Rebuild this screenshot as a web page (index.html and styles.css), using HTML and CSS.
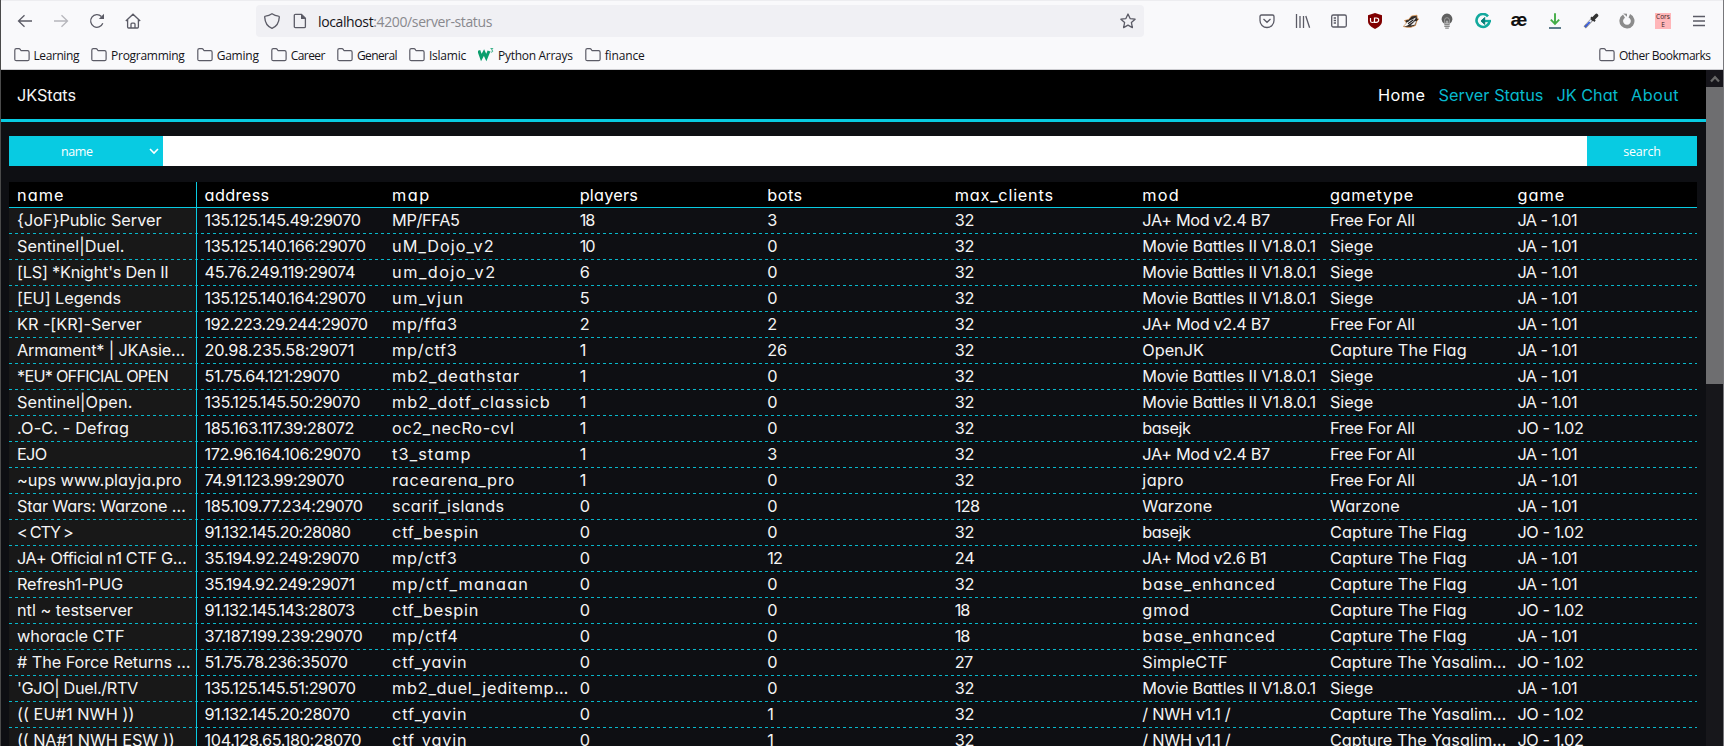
FILE: index.html
```
<!DOCTYPE html>
<html lang="en">
<head>
<meta charset="utf-8">
<title>JKStats</title>
<link rel="stylesheet" href="styles.css">
</head>
<body>
<svg class="defs" width="0" height="0"><symbol id="folder" viewBox="0 0 16 16"><path d="M.8 12.2V3.2Q.8 1.7 2.3 1.7H5q.8 0 1.2.6l.5.8q.4.6 1.2.6h5.7q1.5 0 1.5 1.5v7q0 1.5-1.5 1.5H2.3q-1.5 0-1.5-1.5Z" fill="none" stroke="#5b5b66" stroke-width="1.2"/></symbol></svg>
<div class="window">
  <header class="chrome">
    <div class="toolbar">
      <div class="nav-buttons">
        <svg class="ic" viewBox="0 0 16 16"><path d="M15 8H1.5M7.5 2.2 1.5 8l6 5.8"/></svg>
        <svg class="ic dim" viewBox="0 0 16 16"><path d="M1 8h13.500M8.500 2.200l6 5.800-6 5.800"/></svg>
        <svg class="ic" viewBox="0 0 16 16"><path d="M13.800 10.300A6.300 6.300 0 1 1 12.400 3.500"/><path class="fill" d="M15 .8V6H9.800Z"/></svg>
        <svg class="ic" viewBox="0 0 16 16"><path d="M.8 8 8 1.200 15.200 8M2.600 6.800v7.200q0 1 1 1h8.800q1 0 1-1V6.800M6 15v-3.800q0-1 1-1h2q1 0 1 1V15"/></svg>
      </div>
      <div class="urlbar">
        <svg class="ic" viewBox="0 0 16 16"><path d="M8 .8C6 2.200 3.500 3 1.500 3.100c-.6 0-.8.5-.8 1C1 9.300 3.500 13.600 8 15.300c4.500-1.700 7-6 7.300-11.200 0-.5-.2-1-.8-1C12.500 3 10 2.200 8 .8Z"/></svg>
        <svg class="ic doc" viewBox="0 0 16 16"><path d="M3.500 1.300H9.500L13.400 5.200v8.300q0 1.200-1.200 1.200H3.500q-1.200 0-1.200-1.200v-11q0-1.200 1.200-1.200Z"/><path class="fill" d="M9 1v5h5Z"/></svg>
        <div class="url" data-w="174"><b>localhost</b>:4200/server-status</div>
        <svg class="ic star" viewBox="0 0 16 16"><path stroke-linejoin="round" d="m8 1 2.100 4.600 5 .6-3.700 3.400 1 5L8 12.100l-4.400 2.500 1-5L.9 6.200l5-.6Z"/></svg>
      </div>
      <div class="extensions">
        <svg class="ic" viewBox="0 0 16 16"><path d="M2.500 2h11q1.500 0 1.500 1.500V7.500a7 7 0 0 1-14 0v-4Q1 2 2.500 2ZM4.500 6 8 9.300 11.500 6"/></svg>
        <svg class="ic" viewBox="0 0 16 16"><path d="M1.500 1v14M5 3v12M8.500 3v12M10.800 3l3.800 11.800"/></svg>
        <svg class="ic" viewBox="0 0 16 16"><rect x=".7" y="2" width="14.600" height="12" rx="1.500"/><path d="M7 2v12M2.700 5h2.300M2.700 7.500h2.300M2.700 10h2.300"/></svg>
        <svg class="ic" viewBox="0 0 16 16"><path d="M8 0 15 2.300V8c0 4-3.500 6.300-7 8-3.500-1.700-7-4-7-8V2.300Z" fill="#800000" stroke="none"/><path d="M3.500 5v3q0 1.500 2 1.500t2-1.500V5m0 0v4.300h1.700q2.500 0 2.500-2.200T9.200 5Z" stroke="#fff" stroke-width="1.200"/></svg>
        <svg class="ic" viewBox="0 0 16 16"><path d="M.3 13.500 3.500 10 1.500 7.500 5.500 6.500 8.500 3 14 2.200l.2 3 1.500.8-2 2.500-1.200 4-4.500 1.800H4Z" fill="#302b29" stroke="#e29a55" stroke-width=".8"/><path d="M.8 13.300 5 8.500l8-4-2.500 3.800L4 12.800Z" fill="#fff" stroke="none"/><path d="m7.500 12.500 4.500-4.500 1.200.5-1.500 3.300Z" fill="#eee" stroke="none"/><path d="m5 10.800 5.500-4M3 8l2.500.5" stroke="#222" stroke-width="1.200"/></svg>
        <svg class="ic" viewBox="0 0 16 16"><path d="M5 10.500A5.400 5.400 0 1 1 11 10.500Z" fill="#606060" stroke="none"/><path d="M5.600 10V7q0-2.300 2.400-2.300T10.400 7v3" stroke="#aaa" stroke-width=".8"/><path d="M7.200 12V8.500q.8-1.500 1.600 0V12" stroke="#ddd" stroke-width=".8"/><path d="M5.300 11.500h5.400M5.300 13.300h5.400M6.200 15.200h3.600" stroke="#888" stroke-width="1.300"/></svg>
        <svg class="ic" viewBox="0 0 16 16"><path d="M13 3.300A6.500 6.500 0 1 0 14.500 8" stroke="#12a99d" stroke-width="2.600"/><path d="M6.500 8H16" stroke="#12a99d" stroke-width="2.300"/><path d="M9.700 4.500 6.200 8l3.500 3.500Z" fill="#087e78" stroke="#087e78" stroke-width="1"/></svg>
        <span class="ae">æ</span>
        <svg class="ic" viewBox="0 0 16 16"><path d="M8 .3v10.400M3.800 6.700 8 11l4.200-4.300" stroke="#43ad47" stroke-width="1.900"/><path d="M2 15h12" stroke="#5c7b8b" stroke-width="2"/></svg>
        <svg class="ic" viewBox="0 0 16 16"><path d="m1.700 14.300 7.500-8" stroke="#888" stroke-width="3.200"/><path d="m4 11.700 4.300-4.500" stroke="#e9eefb" stroke-width="1.800"/><path d="m2 14 4.700-5" stroke="#3156df" stroke-width="1.700"/><path d="m8 4.200 4 4" stroke="#333" stroke-width="2"/><path d="m10 6 3.500-3.500" stroke="#333" stroke-width="3.600" stroke-linecap="round"/></svg>
        <svg class="ic" viewBox="0 0 16 16"><path d="M10.300 2.800a5.700 5.700 0 1 1-5.300.3" stroke="#8c8c8c" stroke-width="3.700"/><path d="M4.200.5 8 .8v3Z" fill="#8c8c8c" stroke="none"/></svg>
        <span class="cors">Cors<br>E</span>
        <svg class="ic" viewBox="0 0 16 16"><path d="M2 3.500h12M2 8h12M2 12.500h12"/></svg>
      </div>
    </div>
    <nav class="bookmarks">
      <span class="bm"><svg><use href="#folder"/></svg><span data-w="45.500">Learning</span></span>
      <span class="bm"><svg><use href="#folder"/></svg><span data-w="73.500">Programming</span></span>
      <span class="bm"><svg><use href="#folder"/></svg><span data-w="42">Gaming</span></span>
      <span class="bm"><svg><use href="#folder"/></svg><span data-w="34">Career</span></span>
      <span class="bm"><svg><use href="#folder"/></svg><span data-w="40">General</span></span>
      <span class="bm"><svg><use href="#folder"/></svg><span data-w="37">Islamic</span></span>
      <span class="bm"><svg viewBox="0 0 16 16"><path d="m.8 3.500 2.500 7L6 5.500l2.300 5L11 4" fill="none" stroke="#0b9e6d" stroke-width="3"/><path d="M12.500 1.500h2.300L13.500 3q1.500.3 1.200 1.500-.6 1-2 .5" fill="none" stroke="#0b9e6d" stroke-width=".8"/></svg><span data-w="74.500">Python Arrays</span></span>
      <span class="bm"><svg><use href="#folder"/></svg><span data-w="40">finance</span></span>
      <span class="bm other"><svg><use href="#folder"/></svg><span data-w="91.500">Other Bookmarks</span></span>
    </nav>
  </header>
  <div class="viewport">
    <main class="page">
      <div class="navbar">
        <a class="brand" data-w="59">JKStats</a>
        <div class="links">
          <a class="active" data-w="47.500">Home</a>
          <a data-w="105">Server Status</a>
          <a data-w="61.500">JK Chat</a>
          <a data-w="48">About</a>
        </div>
      </div>
      <div class="search">
        <div class="select"><span data-w="31.500">name</span><svg viewBox="0 0 10 8"><path d="m1 2 4 4 4-4" fill="none" stroke="#fff" stroke-width="1.600"/></svg></div>
        <input class="query" type="text">
        <button class="go"><span data-w="37.500">search</span></button>
      </div>
      <div class="grid" id="grid"></div>
    </main>
    <div class="scrollbar">
      <div class="up"><svg viewBox="0 0 10 8"><path d="m1 6.500 4-4.300 4 4.300" fill="none" stroke="#686868" stroke-width="2.200"/></svg></div>
      <div class="thumb"></div>
    </div>
  </div>
</div>
<script src="app.js"></script>
</body>
</html>
```
FILE: styles.css
```
* { box-sizing: border-box; }
body {
  margin: 0;
  height: 746px;
  overflow: hidden;
  background: #0e0f13;
  font-family: "Open Sans", "Noto Sans", sans-serif;
}
.defs { position: absolute; }
.window {
  height: 746px;
  display: flex;
  flex-direction: column;
  border-left: 1px solid #4a4a4a;
  border-right: 1px solid #77777b;
}
.chrome {
  height: 70px;
  flex: none;
  background: #f9f9fb;
  border-top: 1px solid #ededf0;
  border-bottom: 1px solid #ccccd0;
}
.toolbar { height: 40px; display: flex; align-items: center; padding-left: 16px; padding-right: 16px; }
.ic { width: 16px; height: 16px; flex: none; fill: none; stroke: #5b5b66; stroke-width: 1.3; }
.ic .fill { fill: #5b5b66; stroke: none; }
.dim { opacity: .42; }
.nav-buttons { width: 239px; display: flex; gap: 20px; }
.urlbar {
  width: 888px;
  height: 32px;
  display: flex;
  align-items: center;
  padding: 0 8px;
  border-radius: 4px;
  background: #f0f0f4;
}
.doc { margin-left: 12px; }
.url { margin-left: 10px; padding-top: 2px; font-size: 14px; line-height: 20px; color: #89898e; white-space: nowrap; }
.url b { font-weight: 400; color: #15141a; }
.star { margin-left: auto; }
.extensions { margin-left: auto; display: flex; align-items: center; gap: 20px; }
.ae { width: 16px; text-align: center; font: 700 19px/16px "Liberation Sans", sans-serif; display: flex; justify-content: center; color: #111; padding-bottom: 4px; height: 18px; }
.cors { width: 16px; height: 16px; background: #ffb6b9; color: #332525; font: 6.5px/8px "Open Sans", sans-serif; text-align: center; white-space: nowrap; }
.bookmarks { height: 28px; display: flex; align-items: center; gap: 12.1px; padding: 1px 12.500px 0 12.500px; font-size: 12px; color: #15141a; }
.bm { display: flex; align-items: center; gap: 4px; line-height: 18px; white-space: nowrap; }
.bm > span { padding-top: 1px; }
.bm svg { width: 16px; height: 16px; flex: none; margin-top: -1px; }
.other { margin-left: auto; }
[data-w] { white-space: nowrap; }

.viewport { flex: 1; min-height: 0; display: flex; }
.page {
  flex: 1;
  min-width: 0;
  overflow: hidden;
  background: #0e0f13;
  color: #f4f4f4;
  font-family: Inter, "Open Sans", sans-serif;
  font-feature-settings: "cv11", "calt" 0;
  font-size: 16.3px;
}
.navbar {
  height: 52px;
  display: flex;
  align-items: center;
  justify-content: space-between;
  padding: 0 27px 0 16px;
  background: #000;
  border-bottom: 3px solid #08cbe2;
}
.links { display: flex; gap: 13px; color: #08b9cd; }
.links .active { color: #fff; }
.search { height: 30px; margin: 14px 9px 16px 8px; display: flex; font: 12.5px "Open Sans", sans-serif; }
.select { width: 154px; display: flex; align-items: center; padding: 0 4px 0 52px; color: #fff; background: #08cbe2; }
.select svg { width: 10px; height: 8px; margin-left: auto; }
.query { flex: 1; min-width: 0; border: 0; padding: 0 8px; background: #fff; }
.go { width: 110px; border: 0; padding: 0; color: #fff; background: #08cbe2; font: inherit; }
.grid { margin: 0 9px 0 8px; }
.row {
  height: 26px;
  display: grid;
  grid-template-columns: repeat(9, minmax(0, 1fr));
  background: repeating-linear-gradient(90deg, #08b7ca 0 2px, transparent 2px 6px) bottom / 100% 1px no-repeat;
  background: repeating-linear-gradient(90deg, #08b7ca 0 3px, transparent 3px 6px) bottom / 100% 1px no-repeat;
}
.row.head { background: #000; border-bottom: 1px solid #08cbe2; }
.cell { height: 25px; padding-left: 8px; line-height: 25px; overflow: hidden; white-space: nowrap; }
.cell:first-child { height: 26px; border-right: 1px solid #08cbe2; background: repeating-linear-gradient(90deg, #08b7ca 0 3px, #181818 3px 6px) bottom / 100% 1px no-repeat, #181818; }
.head .cell { line-height: 26px; color: #fff; }
.head .cell:first-child { height: 25px; background: #000; }
.scrollbar { width: 17px; background: #17171b; }
.up { height: 17px; display: flex; align-items: center; justify-content: center; background: #16151b; }
.up svg { width: 10px; height: 8px; }
.thumb { height: 297px; background: #6e6e70; }
```
FILE: app.js
```
// Text widths in px for values shared by many rows.
const widths = {
  "JA+ Mod v2.4 B7": 127.5, "JA+ Mod v2.6 B1": 124, "Movie Battles II V1.8.0.1": 173.5, "OpenJK": 61.5,
  "basejk": 48, "japro": 41.5, "Warzone": 70, "base_enhanced": 133.5, "gmod": 48, "SimpleCTF": 85.5,
  "/ NWH v1.1 /": 88, "Free For All": 85, "Siege": 43.5, "Capture The Flag": 137,
  "Capture The Yasalim…": 176.5, "JA - 1.01": 59.5, "JO - 1.02": 66,
  "0": 10, "1": 5, "2": 9, "3": 9, "5": 9.5, "6": 9.5, "10": 15, "12": 15, "18": 14.5, "24": 20,
  "26": 19.5, "27": 18, "32": 19.5, "128": 24.5
};
const header = [["name", 47.5], ["address", 65], ["map", 38.5], ["players", 58.5], ["bots", 35.5], ["max_clients", 99], ["mod", 37.5], ["gametype", 84], ["game", 48]];
const JP = "JA+ Mod v2.4 B7", MB = "Movie Battles II V1.8.0.1";
const FFA = "Free For All", CTF = "Capture The Flag", CTY = "Capture The Yasalim…";
const JA = "JA - 1.01", JO = "JO - 1.02";
const rows = [
  [["{JoF}Public Server", 144.5], ["135.125.145.49:29070", 156], ["MP/FFA5", 67.5], 18, 3, 32, JP, FFA, JA],
  [["Sentinel|Duel.", 107.5], ["135.125.140.166:29070", 161], ["uM_Dojo_v2", 102.5], 10, 0, 32, MB, "Siege", JA],
  [["[LS] *Knight's Den II", 151.5], ["45.76.249.119:29074", 150.5], ["um_dojo_v2", 104.5], 6, 0, 32, MB, "Siege", JA],
  [["[EU] Legends", 104], ["135.125.140.164:29070", 161], ["um_vjun", 72.5], 5, 0, 32, MB, "Siege", JA],
  [["KR -[KR]-Server", 124.5], ["192.223.29.244:29070", 163], ["mp/ffa3", 65.5], 2, 2, 32, JP, FFA, JA],
  [["Armament* | JKAsie…", 168], ["20.98.235.58:29071", 149.5], ["mp/ctf3", 65.5], 1, 26, 32, "OpenJK", CTF, JA],
  [["*EU* OFFICIAL OPEN", 151], ["51.75.64.121:29070", 135], ["mb2_deathstar", 128], 1, 0, 32, MB, "Siege", JA],
  [["Sentinel|Open.", 115.5], ["135.125.145.50:29070", 155.5], ["mb2_dotf_classicb", 158.5], 1, 0, 32, MB, "Siege", JA],
  [[".O-C. - Defrag", 112], ["185.163.117.39:28072", 149.5], ["oc2_necRo-cvl", 122.5], 1, 0, 32, "basejk", FFA, JO],
  [["EJO", 29.5], ["172.96.164.106:29070", 156], ["t3_stamp", 79.5], 1, 3, 32, JP, FFA, JA],
  [["~ups www.playja.pro", 164.5], ["74.91.123.99:29070", 139.5], ["racearena_pro", 123], 1, 0, 32, "japro", FFA, JA],
  [["Star Wars: Warzone …", 168.5], ["185.109.77.234:29070", 158], ["scarif_islands", 112.5], 0, 0, 128, "Warzone", "Warzone", JA],
  [["< CTY >", 55.5], ["91.132.145.20:28080", 146], ["ctf_bespin", 87], 0, 0, 32, "basejk", CTF, JO],
  [["JA+ Official n1 CTF G…", 169.5], ["35.194.92.249:29070", 154.5], ["mp/ctf3", 65.5], 0, 12, 24, "JA+ Mod v2.6 B1", CTF, JA],
  [["Refresh1-PUG", 106], ["35.194.92.249:29071", 150], ["mp/ctf_manaan", 137], 0, 0, 32, "base_enhanced", CTF, JA],
  [["ntl ~ testserver", 116], ["91.132.145.143:28073", 150], ["ctf_bespin", 87], 0, 0, 18, "gmod", CTF, JO],
  [["whoracle CTF", 107.5], ["37.187.199.239:29070", 158], ["mp/ctf4", 66.5], 0, 0, 18, "base_enhanced", CTF, JA],
  [["# The Force Returns …", 173.5], ["51.75.78.236:35070", 143], ["ctf_yavin", 75.5], 0, 0, 27, "SimpleCTF", CTY, JO],
  [["'GJO| Duel./RTV", 121], ["135.125.145.51:29070", 151], ["mb2_duel_jeditemp…", 177], 0, 0, 32, MB, "Siege", JA],
  [["(( EU#1 NWH ))", 117.5], ["91.132.145.20:28070", 145], ["ctf_yavin", 75.5], 0, 1, 32, "/ NWH v1.1 /", CTY, JO],
  [["(( NA#1 NWH ESW ))", 157.5], ["104.128.65.180:28070", 156.5], ["ctf_yavin", 75.5], 0, 1, 32, "/ NWH v1.1 /", CTY, JO]
];

function addRow(values, className) {
  const row = document.createElement("div");
  row.className = className;
  for (const value of values) {
    const [text, width] = Array.isArray(value) ? value : [String(value), widths[value]];
    const cell = document.createElement("div");
    cell.className = "cell";
    const label = document.createElement("span");
    label.textContent = text;
    label.dataset.w = width;
    cell.append(label);
    row.append(cell);
  }
  document.getElementById("grid").append(row);
}
addRow(header, "row head");
rows.forEach(r => addRow(r, "row"));

// Track each label so that it takes up its set width.
function textWidth(el) {
  const range = document.createRange();
  range.selectNodeContents(el);
  return range.getBoundingClientRect().width;
}
document.querySelectorAll("[data-w]").forEach(el => {
  const count = el.textContent.length;
  if (count < 2) return;
  const text = document.createElement("span");
  text.append(...el.childNodes);
  el.append(text);
  const spacing = (Number(el.dataset.w) - textWidth(text)) / count;
  text.style.letterSpacing = spacing.toFixed(3) + "px";
});
```
